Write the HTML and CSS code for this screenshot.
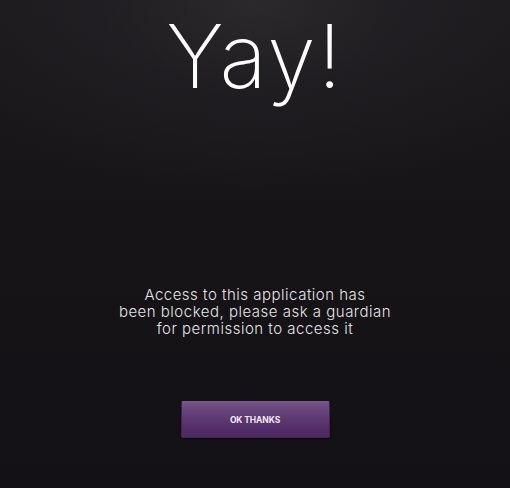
FILE: index.html
```html
<!DOCTYPE html>
<html>
<head>
<meta charset="utf-8">
<link rel="stylesheet" href="styles.css">
</head>
<body>
<main class="screen">
  <h1 class="title">Yay!</h1>
  <p class="message">Access to this application has<br>been blocked, please ask a guardian<br>for permission to access it</p>
  <button class="ok-btn">OK THANKS</button>
</main>
</body>
</html>
```
FILE: styles.css
```css
html, body {
  margin: 0;
  padding: 0;
  background: #141216;
}
.screen {
  width: 510px;
  height: 488px;
  display: flex;
  flex-direction: column;
  align-items: center;
  box-sizing: border-box;
  padding-top: 12px;
  font-family: "Inter", "DejaVu Sans", sans-serif;
  background:
    radial-gradient(ellipse 340px 200px at 255px 0px, #2b292c 0%, rgba(35,33,37,0.6) 45%, rgba(20,18,22,0) 100%),
    linear-gradient(180deg, #1c1a1d 0%, #161417 45%, #131115 100%);
  overflow: hidden;
}
.title {
  margin: 0;
  font-size: 88px;
  line-height: 88px;
  font-weight: 200;
  color: #ffffff;
  letter-spacing: 2px;
}
.message {
  margin: 186px 0 0 0;
  font-size: 15px;
  line-height: 17px;
  font-weight: 300;
  color: #e6e4e8;
  text-align: center;
  letter-spacing: 0.5px;
}
.ok-btn {
  margin-top: 64px;
  width: 149px;
  height: 37px;
  border: 1px solid #3e2450;
  border-top-color: #7a5a8c;
  border-radius: 2px;
  background: linear-gradient(180deg, #735285 0%, #5e3a72 45%, #512c67 80%, #4e2a63 100%);
  color: #f3e8f6;
  font-family: "Inter", "DejaVu Sans", sans-serif;
  font-weight: 700;
  font-size: 8.5px;
  letter-spacing: -0.1px;
  padding: 0;
  box-shadow: 0 1px 2px rgba(0,0,0,0.5);
}
```
